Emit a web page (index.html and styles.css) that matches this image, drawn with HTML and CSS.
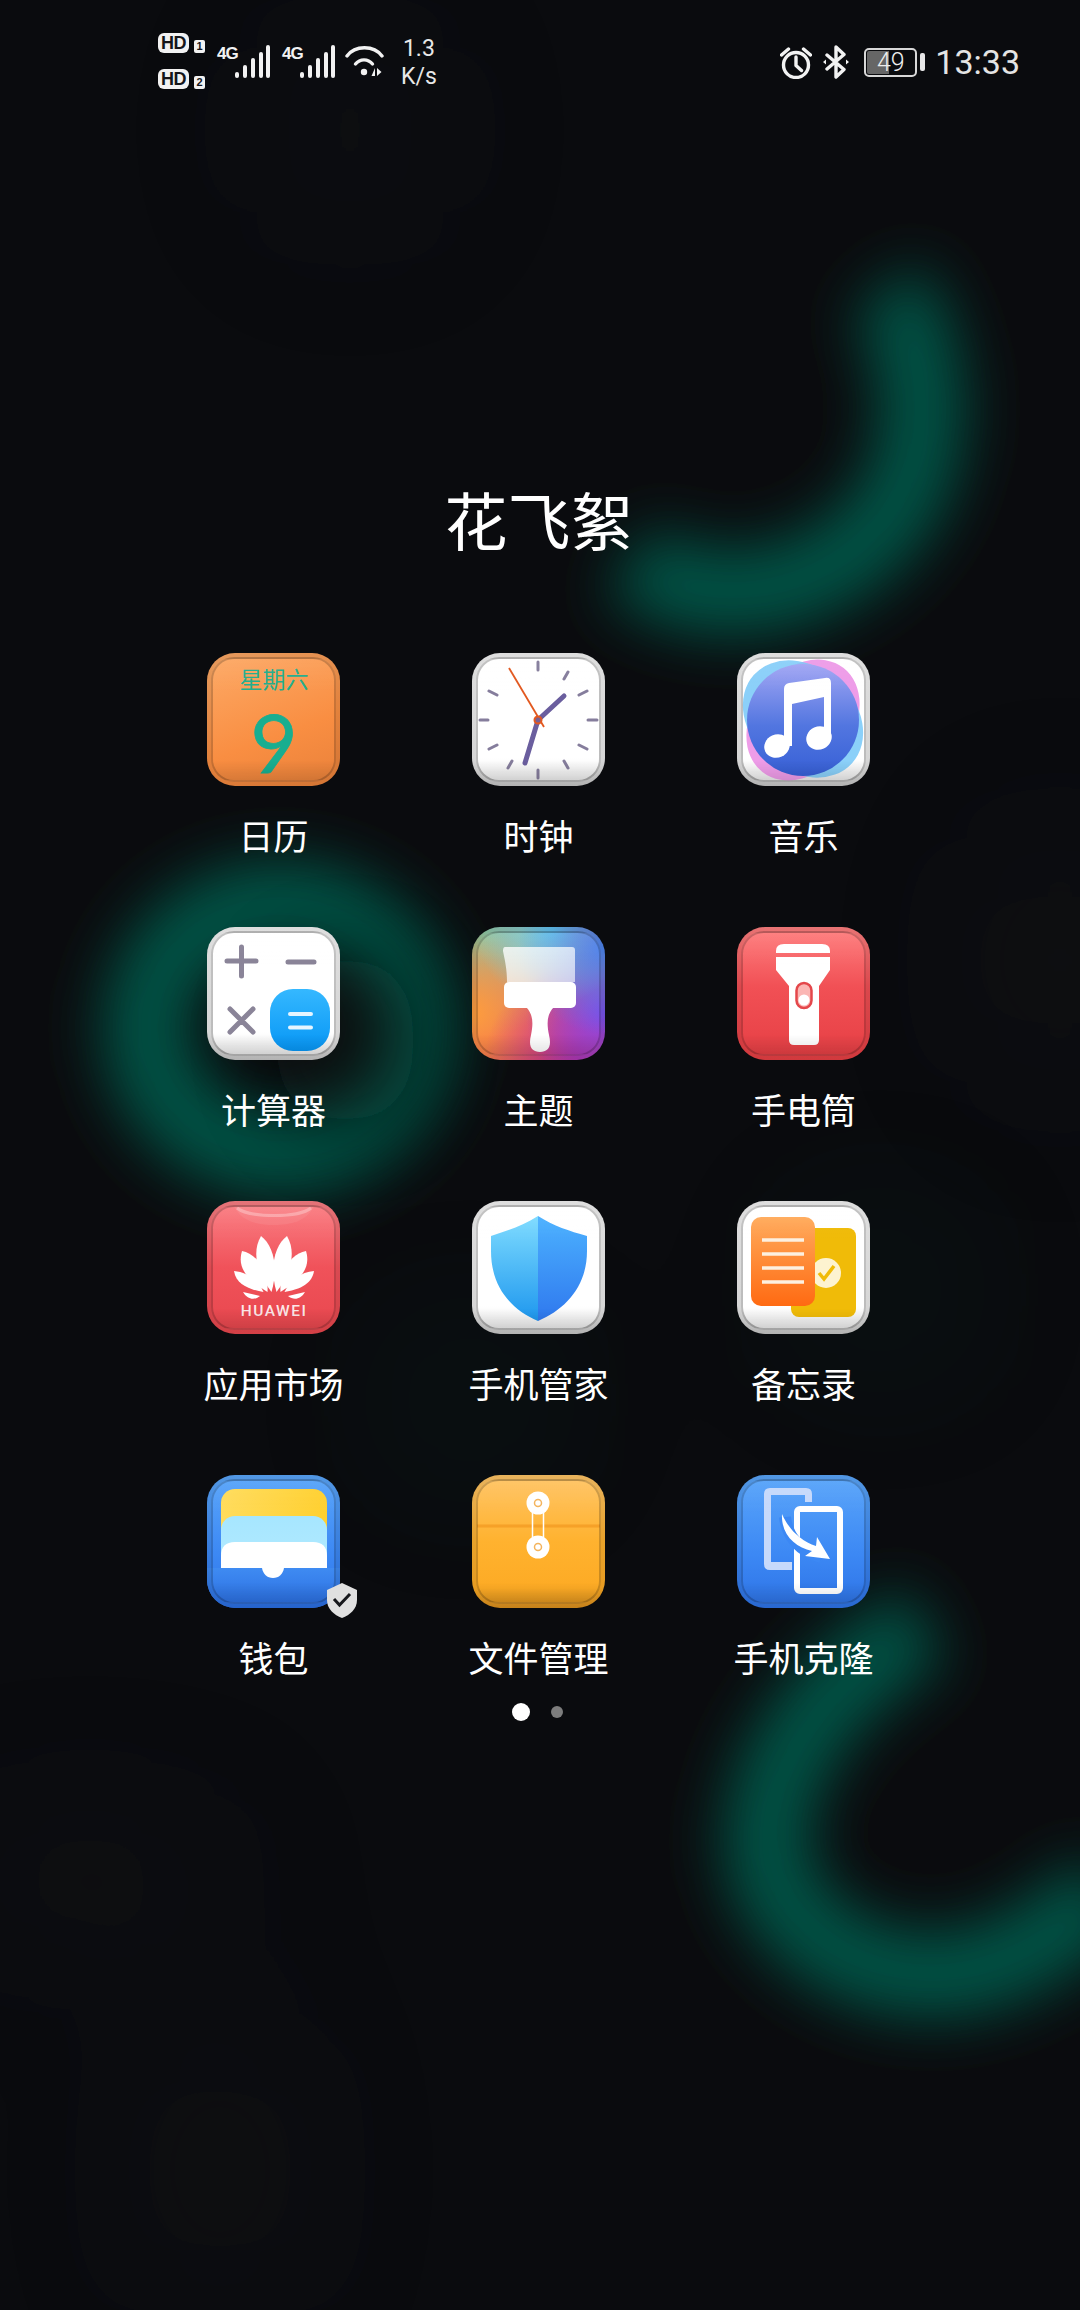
FILE: index.html
```html
<!DOCTYPE html>
<html lang="zh-CN">
<head>
<meta charset="utf-8">
<title>花飞絮</title>
<link rel="stylesheet" href="styles.css">
</head>
<body>
<svg class="defs" width="0" height="0" aria-hidden="true">
  <defs>
    <filter id="blurM" x="-80%" y="-80%" width="260%" height="260%"><feGaussianBlur stdDeviation="40"/></filter>
    <filter id="blurL" x="-50%" y="-50%" width="200%" height="200%"><feGaussianBlur stdDeviation="30"/></filter>
    <filter id="blurXL" x="-100%" y="-100%" width="300%" height="300%"><feGaussianBlur stdDeviation="80"/></filter>
    <linearGradient id="gBlueDisc" x1="0" y1="0" x2="0" y2="1"><stop offset="0" stop-color="#a2a6f4"/><stop offset=".55" stop-color="#5276e0"/><stop offset="1" stop-color="#3760d6"/></linearGradient>
    <linearGradient id="gKey" x1="0" y1="0" x2="0" y2="1"><stop offset="0" stop-color="#35b8ff"/><stop offset="1" stop-color="#0796f5"/></linearGradient>
    <linearGradient id="gBristle" x1="0" y1="0" x2="1" y2="1"><stop offset="0" stop-color="#fff" stop-opacity=".8"/><stop offset="1" stop-color="#fff" stop-opacity=".62"/></linearGradient>
    <linearGradient id="gShieldL" x1="0" y1="0" x2="0" y2="1"><stop offset="0" stop-color="#7fdcff"/><stop offset="1" stop-color="#1e97ee"/></linearGradient>
    <linearGradient id="gShieldR" x1="0" y1="0" x2="0" y2="1"><stop offset="0" stop-color="#4cb2ff"/><stop offset="1" stop-color="#2f78ee"/></linearGradient>
    <linearGradient id="gNote" x1="0" y1="0" x2="0" y2="1"><stop offset="0" stop-color="#ffab5c"/><stop offset="1" stop-color="#ff6a12"/></linearGradient>
    <linearGradient id="gPocket" x1="0" y1="0" x2="0" y2="1"><stop offset="0" stop-color="#3f8bf2"/><stop offset="1" stop-color="#2a6de0"/></linearGradient>
    <linearGradient id="gYellow" x1="0" y1="0" x2="1" y2="0"><stop offset="0" stop-color="#ffdc5c"/><stop offset="1" stop-color="#ffd02f"/></linearGradient>
    <linearGradient id="gCyan" x1="0" y1="0" x2="0" y2="1"><stop offset="0" stop-color="#a6e6ff"/><stop offset="1" stop-color="#b4ebff"/></linearGradient>
    <g id="petals">
      <path d="M64.500 91C53 76 43 54 54 35C66 44 72 66 64.500 91Z"/>
      <path d="M60.500 91C45 81 29 70 35 50C50 53 62 70 60.500 91Z"/>
      <path d="M56.500 91C44 89 29 84 27 70C40 71 51 79 56.500 91Z"/>
      <path d="M53 95L36 91C40 98 47 100 53 95Z"/>
    </g>
  </defs>
</svg>

<main class="screen">
  <svg class="wallpaper" width="1080" height="2310" viewBox="0 0 1080 2310" aria-hidden="true">
    <g filter="url(#blurXL)" class="wp-grey">
      <ellipse cx="350" cy="130" rx="70" ry="90"/>
      <ellipse cx="1060" cy="960" rx="70" ry="130"/>
      <ellipse cx="90" cy="1880" rx="150" ry="50"/>
      <ellipse cx="220" cy="2170" rx="60" ry="150"/>
    </g>
    <g filter="url(#blurXL)" class="wp-faint">
      <ellipse cx="880" cy="1290" rx="70" ry="60"/>
      <ellipse cx="470" cy="1400" rx="70" ry="60"/>
    </g>
    <g filter="url(#blurL)" class="wp-arc">
      <path d="M885 290C925 340 935 430 905 490C880 545 810 590 740 592C700 594 665 585 630 560"/>
      <ellipse cx="280" cy="1028" rx="135" ry="125"/>
      <path d="M925 1625C830 1680 765 1760 766 1847C770 1920 850 1975 930 1975C990 1975 1040 1950 1110 1890"/>
    </g>
    <ellipse class="wp-dark" cx="345" cy="1040" rx="72" ry="85" filter="url(#blurM)"/>
  </svg>

  <header class="status">
    <div class="status-left">
      <div class="hd-stack">
        <div class="hd-row"><span class="hd">HD</span><span class="hd-num">1</span></div>
        <div class="hd-row"><span class="hd">HD</span><span class="hd-num">2</span></div>
      </div>
      <div class="sim">
        <span class="net">4G</span>
        <svg class="bars" width="35" height="33" viewBox="0 0 35 33"><rect x="0" y="27" width="4" height="6" rx="2"/><rect x="8" y="20" width="4" height="13" rx="2"/><rect x="16" y="13" width="4" height="20" rx="2"/><rect x="24" y="7" width="4" height="26" rx="2"/><rect x="31" y="0" width="4" height="33" rx="2"/></svg>
      </div>
      <div class="sim">
        <span class="net">4G</span>
        <svg class="bars" width="35" height="33" viewBox="0 0 35 33"><rect x="0" y="27" width="4" height="6" rx="2"/><rect x="8" y="20" width="4" height="13" rx="2"/><rect x="16" y="13" width="4" height="20" rx="2"/><rect x="24" y="7" width="4" height="26" rx="2"/><rect x="31" y="0" width="4" height="33" rx="2"/></svg>
      </div>
      <svg class="wifi" width="39" height="32" viewBox="0 0 39 32">
        <path class="line" d="M2 11C10 0 29 0 37 11"/>
        <path class="line" d="M10.500 19C15 13.500 23 13.500 27.500 19"/>
        <circle class="solid" cx="19" cy="27" r="3.200"/>
        <path class="solid" d="M30 23V31H26.500ZM32 23V31L36.500 27Z"/>
      </svg>
      <div class="speed"><span>1.3</span><span>K/s</span></div>
    </div>
    <div class="status-right">
      <svg class="alarm" width="32" height="33" viewBox="0 0 32 33">
        <circle class="line" cx="16" cy="19" r="12.500"/>
        <path class="line" d="M16 11V19.500L21.500 24.500M1.500 9L8.500 3M30.500 9L23.500 3"/>
      </svg>
      <svg class="bluetooth" width="26" height="34" viewBox="0 0 26 34">
        <path class="line" d="M4 10L21 24.500L13 32V2L21 9.500L4 24"/>
        <path class="solid" d="M0 17L3 14.500V19.500ZM26 17L23 14.500V19.500Z"/>
      </svg>
      <div class="battery-wrap">
        <div class="battery">49</div>
        <span class="nub"></span>
      </div>
      <time class="clock">13:33</time>
    </div>
  </header>

  <h1 class="folder-title">花飞絮</h1>

  <section class="grid">
    <div class="app">
      <div class="icon i-calendar">
        <svg class="cal-art" viewBox="0 0 133 133" width="133" height="133">
          <text class="cal-week" x="67" y="35" text-anchor="middle">星期六</text>
          <text class="cal-day" x="67" y="120" text-anchor="middle" textLength="47" lengthAdjust="spacingAndGlyphs">9</text>
        </svg>
      </div>
      <span class="label">日历</span>
    </div>

    <div class="app">
      <div class="icon i-white">
        <svg viewBox="0 0 133 133" width="133" height="133">
          <g class="tick">
            <path d="M66 9V17M66 117V125M8 67H16M116 67H125"/>
            <path d="M96 19L92 26M115 38L107 42M115 96L107 92M96 115L92 108M36 115L40 108M17 96L25 92M17 38L25 42"/>
          </g>
          <path class="hand" d="M66 67L92 43"/>
          <path class="hand" d="M66 67L53 110"/>
          <path class="second" d="M37 15L72 74"/>
          <circle class="pivot" cx="66" cy="67" r="3.500"/>
        </svg>
      </div>
      <span class="label">时钟</span>
    </div>

    <div class="app">
      <div class="icon i-white">
        <svg viewBox="0 0 133 133" width="133" height="133">
          <ellipse class="m-pink" cx="66" cy="67" rx="66" ry="50" transform="rotate(-52 66 67)"/>
          <ellipse class="m-cyan" cx="66" cy="66" rx="66" ry="52" transform="rotate(42 66 66)"/>
          <circle cx="66" cy="67" r="56" fill="url(#gBlueDisc)"/>
          <g class="white-fill">
            <path d="M47 36Q47 31 52 30L88 25Q94 24 94 30V85H87V44L55 51V93H47Z"/>
            <ellipse cx="40" cy="93" rx="13" ry="11.500" transform="rotate(-25 40 93)"/>
            <ellipse cx="82" cy="85" rx="13" ry="11.500" transform="rotate(-25 82 85)"/>
          </g>
        </svg>
      </div>
      <span class="label">音乐</span>
    </div>

    <div class="app">
      <div class="icon i-white">
        <svg viewBox="0 0 133 133" width="133" height="133">
          <path class="calc-op" d="M20 34H49M34.500 20V49M81 35H107M23 82L46 105M46 82L23 105"/>
          <rect x="63" y="62" width="60" height="62" rx="23" fill="url(#gKey)"/>
          <path class="calc-eq" d="M83 87H104M83 100.500H104"/>
        </svg>
      </div>
      <span class="label">计算器</span>
    </div>

    <div class="app">
      <div class="icon i-theme">
        <svg viewBox="0 0 133 133" width="133" height="133">
          <path d="M33 20H100Q103 20 103 23V55H35C35 42 33 34 31 24Q31 20 33 20Z" fill="url(#gBristle)"/>
          <rect class="white-fill" x="32" y="55" width="72" height="26" rx="5"/>
          <path class="white-fill" d="M54 80H82C76 86 74 94 77 108C80 120 76 125 68 125C60 125 56 120 59 108C62 94 60 86 54 80Z"/>
        </svg>
      </div>
      <span class="label">主题</span>
    </div>

    <div class="app">
      <div class="icon i-red">
        <svg viewBox="0 0 133 133" width="133" height="133">
          <g class="white-fill">
            <path d="M39 26V24Q39 17 47 17H85Q93 17 93 24V26Z"/>
            <path d="M39 30H93V43L82 59V113Q82 118 77 118H57Q52 118 52 113V59L39 43Z"/>
          </g>
          <rect class="torch-switch" x="59.500" y="56" width="15" height="25" rx="7.500"/>
          <circle class="white-fill" cx="67" cy="73" r="5.500"/>
        </svg>
      </div>
      <span class="label">手电筒</span>
    </div>

    <div class="app">
      <div class="icon i-huawei">
        <svg viewBox="0 0 133 133" width="133" height="133">
          <path class="tray-shade" d="M27 5H107C100 20 84 24 67 24C50 24 34 20 27 5Z"/>
          <path class="tray-line" d="M30 7C42 17 92 17 104 7"/>
          <g class="white-fill">
            <use href="#petals"/>
            <use href="#petals" transform="translate(134 0) scale(-1 1)"/>
          </g>
          <text class="hw-word" x="67" y="115" text-anchor="middle">HUAWEI</text>
        </svg>
      </div>
      <span class="label">应用市场</span>
    </div>

    <div class="app">
      <div class="icon i-white">
        <svg viewBox="0 0 133 133" width="133" height="133">
          <path d="M66 15C50 25 35 30 19 35L19 50C19 85 38 108 66 120Z" fill="url(#gShieldL)"/>
          <path d="M66 15C82 25 97 30 115 35L115 50C115 85 94 108 66 120Z" fill="url(#gShieldR)"/>
        </svg>
      </div>
      <span class="label">手机管家</span>
    </div>

    <div class="app">
      <div class="icon i-white">
        <svg viewBox="0 0 133 133" width="133" height="133">
          <rect class="memo-back" x="54" y="27" width="65" height="89" rx="8"/>
          <circle class="memo-badge" cx="89" cy="72" r="15"/>
          <path class="memo-check" d="M82 72L87 78L97 65"/>
          <rect x="14" y="16" width="64" height="89" rx="10" fill="url(#gNote)"/>
          <path class="memo-line" d="M25 39H67M25 53H67M25 67H67M25 81H67"/>
        </svg>
      </div>
      <span class="label">备忘录</span>
    </div>

    <div class="app">
      <div class="icon i-blue">
        <svg viewBox="0 0 133 133" width="133" height="133">
          <rect x="14" y="14" width="106" height="60" rx="14" fill="url(#gYellow)"/>
          <rect x="14" y="41" width="106" height="60" rx="14" fill="url(#gCyan)"/>
          <path class="white-fill" d="M14 93V81Q14 67 28 67H106Q120 67 120 81V93Z"/>
          <rect x="0" y="93" width="133" height="40" fill="url(#gPocket)"/>
          <path class="white-fill" d="M55 93H77C76 99 72 103 66 103C60 103 56 99 55 93Z"/>
        </svg>
        <svg class="badge" width="30" height="35" viewBox="0 0 30 35">
          <path class="badge-shield" d="M15 0L30 7V17C30 26 23 32 15 35C7 32 0 26 0 17V7Z"/>
          <path class="badge-check" d="M7 16L12.500 22L23 11"/>
        </svg>
      </div>
      <span class="label">钱包</span>
    </div>

    <div class="app">
      <div class="icon i-files">
        <svg viewBox="0 0 133 133" width="133" height="133">
          <rect class="fold" x="5" y="49.500" width="123" height="3"/>
          <path class="string" d="M60.500 28V72M71.500 28V72"/>
          <circle class="white-fill" cx="66" cy="28" r="11.500"/>
          <circle class="white-fill" cx="66" cy="72" r="11.500"/>
          <circle class="eyelet" cx="66" cy="28" r="3.500"/>
          <circle class="eyelet" cx="66" cy="72" r="3.500"/>
        </svg>
      </div>
      <span class="label">文件管理</span>
    </div>

    <div class="app">
      <div class="icon i-blue">
        <svg viewBox="0 0 133 133" width="133" height="133">
          <path class="phone-back" d="M75 27V19Q75 13 69 13H33Q27 13 27 19V89Q27 95 33 95H55V87H34V20H68V27Z"/>
          <rect class="phone-front" x="60" y="34" width="43" height="82" rx="3"/>
          <path class="arrow-gap" d="M48 42C50 62 64 77 84 82" />
          <path class="white-fill" d="M45 39C52 55 64 66 79 71L80 62L93 84L68 81L75 76C58 72 44 60 45 39Z"/>
        </svg>
      </div>
      <span class="label">手机克隆</span>
    </div>
  </section>

  <nav class="pager"><span class="dot on"></span><span class="dot"></span></nav>
</main>
</body>
</html>
```

FILE: styles.css
```css
* { box-sizing: border-box; }
html, body { margin: 0; padding: 0; background: #0a0b0e; }
.defs { position: absolute; }

.screen {
  position: relative;
  width: 1080px;
  height: 2310px;
  overflow: hidden;
  background: #0a0b0e;
  color: #fff;
  font-family: "Noto Sans CJK SC", "Noto Sans", sans-serif;
}
.wallpaper { position: absolute; left: 0; top: 0; }
.wp-grey { fill: #232425; opacity: .28; }
.wp-faint { fill: #0f3a33; opacity: .25; }
.wp-arc { fill: none; stroke: #015546; stroke-width: 84; }
.wp-dark { fill: #07090a; opacity: .6; }

.line { fill: none; stroke: #f2f2f2; stroke-width: 3.400; stroke-linecap: round; stroke-linejoin: round; }
.solid { fill: #f2f2f2; }
.white-fill { fill: #fff; }

/* status bar */
.status {
  position: relative;
  height: 122px;
  padding: 0 60px 0 158px;
  display: flex;
  align-items: center;
  justify-content: space-between;
}
.status-left, .status-right { display: flex; align-items: center; }
.status-left { gap: 12px; }
.status-right { gap: 11px; margin-top: 2px; }
.hd-stack { display: flex; flex-direction: column; gap: 16px; }
.hd-row { display: flex; align-items: flex-end; gap: 5px; }
.hd {
  width: 31px; height: 20px;
  border-radius: 6px;
  background: #f2f2f2;
  color: #15161a;
  font: 700 18px/20px "Liberation Sans", sans-serif;
  letter-spacing: -0.5px;
  text-align: center;
}
.hd-num {
  width: 11px; height: 13px;
  border-radius: 2px;
  background: #f2f2f2;
  color: #15161a;
  font: 700 11px/13px "Liberation Sans", sans-serif;
  text-align: center;
}
.sim { display: flex; align-items: flex-end; }
.net {
  width: 18px;
  align-self: flex-start;
  font: 700 17px/17px "Liberation Sans Narrow", "Liberation Sans", sans-serif;
  letter-spacing: -1px;
  color: #f2f2f2;
}
.bars { fill: #f2f2f2; display: block; }
.wifi { margin-left: -2px; }
.speed {
  display: flex; flex-direction: column; align-items: center;
  margin: 4px 0 0 5px;
  font: 400 23px/28px "Roboto", sans-serif;
  color: #e8e8e8;
}
.battery-wrap { display: flex; align-items: center; gap: 3px; margin-left: 4px; }
.battery {
  width: 53px; height: 29px;
  border: 2px solid #d8d8d8;
  border-radius: 5px;
  background: linear-gradient(90deg, #666 0 47%, transparent 47%) content-box;
  padding: 1px;
  color: #eee;
  font: 300 25px/24px "Roboto", sans-serif;
  text-align: center;
}
.nub { width: 5px; height: 18px; border-radius: 2px; background: #e8e8e8; }
.clock {
  margin-left: -1px;
  font: 400 34px/40px "Roboto", sans-serif;
  color: #e4e4e4;
}

/* folder */
.folder-title {
  position: relative;
  margin: 356px 0 95px;
  height: 80px;
  padding-right: 2px;
  font-size: 63px;
  font-weight: 400;
  line-height: 80px;
  text-align: center;
}
.grid {
  position: relative;
  margin-left: 141px;
  width: 795px;
  display: grid;
  grid-template-columns: repeat(3, 265px);
  row-gap: 65px;
}
.app { display: flex; flex-direction: column; align-items: center; height: 209px; }
.label {
  margin-top: 24px;
  font-size: 35px;
  font-weight: 400;
  line-height: 50px;
  white-space: nowrap;
}

/* icons */
.icon {
  position: relative;
  width: 133px;
  height: 133px;
  border-radius: 28px;
}
.icon > svg:first-of-type { position: relative; display: block; border-radius: 28px; }
.icon::after {
  content: "";
  position: absolute;
  inset: 4px;
  border-radius: 23px;
  border: 2px solid rgba(0, 0, 0, .2);
  box-shadow: 0 0 0 4px rgba(0, 0, 0, .09);
  background: linear-gradient(180deg, rgba(255, 255, 255, .04) 0, transparent 30%, transparent 84%, rgba(0, 0, 0, .11) 100%);
}
.i-calendar { background: linear-gradient(160deg, #fdab68, #f98e42 60%, #e9813a); }
.icon > .cal-art { overflow: visible; }
.i-white { background: linear-gradient(180deg, #f4f4f4 0, #ececec 80%, #c4c4c4 100%); }
.i-white::before {
  content: "";
  position: absolute;
  inset: 6px;
  border-radius: 21px;
  background: linear-gradient(180deg, #fff 0, #fff 82%, #ececec 100%);
}
.i-red { background: linear-gradient(180deg, #ff8080, #f15055 45%, #e63f44); }
.i-huawei { background: linear-gradient(180deg, #fb8085, #f0525a 50%, #e8474e); }
.i-blue { background: linear-gradient(180deg, #5aa6fa, #3c88f4 60%, #2e73e6); }
.i-files { background: linear-gradient(180deg, #ffc566, #ffb22f 50%, #fdab25 85%, #d98f1e); }
.i-theme {
  background:
    radial-gradient(circle at 100% 15%, #4a84f0 0, transparent 50%),
    radial-gradient(circle at 60% 0, #69e0f0 0, transparent 50%),
    radial-gradient(circle at 100% 65%, #8345ea 0, transparent 50%),
    radial-gradient(circle at 80% 100%, #c0309c 0, transparent 55%),
    radial-gradient(circle at 0 65%, #ff9d3c 0, transparent 55%),
    radial-gradient(circle at 0 0, #83d3a8 0, transparent 60%),
    #f0625a;
}

.cal-week { font-size: 23px; fill: #22ae8e; font-family: "Noto Sans CJK SC", sans-serif; }
.cal-day { font-size: 82px; fill: #18ae90; stroke: #18ae90; stroke-width: .8; font-family: "Lato", sans-serif; font-weight: 400; }

.tick { fill: none; stroke: #857d9c; stroke-width: 3; stroke-linecap: round; }
.hand { fill: none; stroke: #6a5e9e; stroke-width: 5; stroke-linecap: round; }
.second { fill: none; stroke: #e2581f; stroke-width: 1.800; }
.pivot { fill: #7a5f90; stroke: #e2581f; stroke-width: 2; }

.m-pink { fill: #ee9ce8; }
.m-cyan { fill: #77c8f8; opacity: .85; }

.calc-op { fill: none; stroke: #8a8498; stroke-width: 5; stroke-linecap: round; }
.calc-eq { fill: none; stroke: #e6f5ff; stroke-width: 4; stroke-linecap: round; }

.torch-switch { fill: #fbb6b4; stroke: #e4474b; stroke-width: 2.500; }

.tray-shade { fill: rgba(255, 255, 255, .07); }
.tray-line { fill: none; stroke: rgba(255, 255, 255, .3); stroke-width: 3; }
.hw-word { fill: rgba(255, 255, 255, .88); font: 500 15.500px "Roboto", sans-serif; letter-spacing: 1.500px; }

.memo-back { fill: #f0bb08; }
.memo-badge { fill: #fdf3d0; }
.memo-check { fill: none; stroke: #f0bb08; stroke-width: 3.500; }
.memo-line { fill: none; stroke: #fdf0e0; stroke-width: 3.500; }

.badge { position: absolute; left: 120px; top: 108px; z-index: 1; }
.badge-shield { fill: #e0e0e0; }
.badge-check { fill: none; stroke: #17181c; stroke-width: 3; }

.fold { fill: #f39a22; opacity: .75; }
.string { fill: none; stroke: #fff; stroke-width: 1.500; }
.eyelet { fill: #fff; stroke: #f4b45c; stroke-width: 1.500; }

.phone-back { fill: #c6d9fb; }
.phone-front { fill: none; stroke: #fff; stroke-width: 6; }
.arrow-gap { fill: none; stroke: #3c88f4; stroke-width: 12; }

/* pager */
.pager {
  position: relative;
  margin-top: 19px;
  padding-right: 5px;
  height: 18px;
  display: flex;
  align-items: center;
  justify-content: center;
  gap: 21px;
}
.dot { width: 12px; height: 12px; border-radius: 50%; background: #7d7d7d; }
.dot.on { width: 18px; height: 18px; background: #fff; }
```
